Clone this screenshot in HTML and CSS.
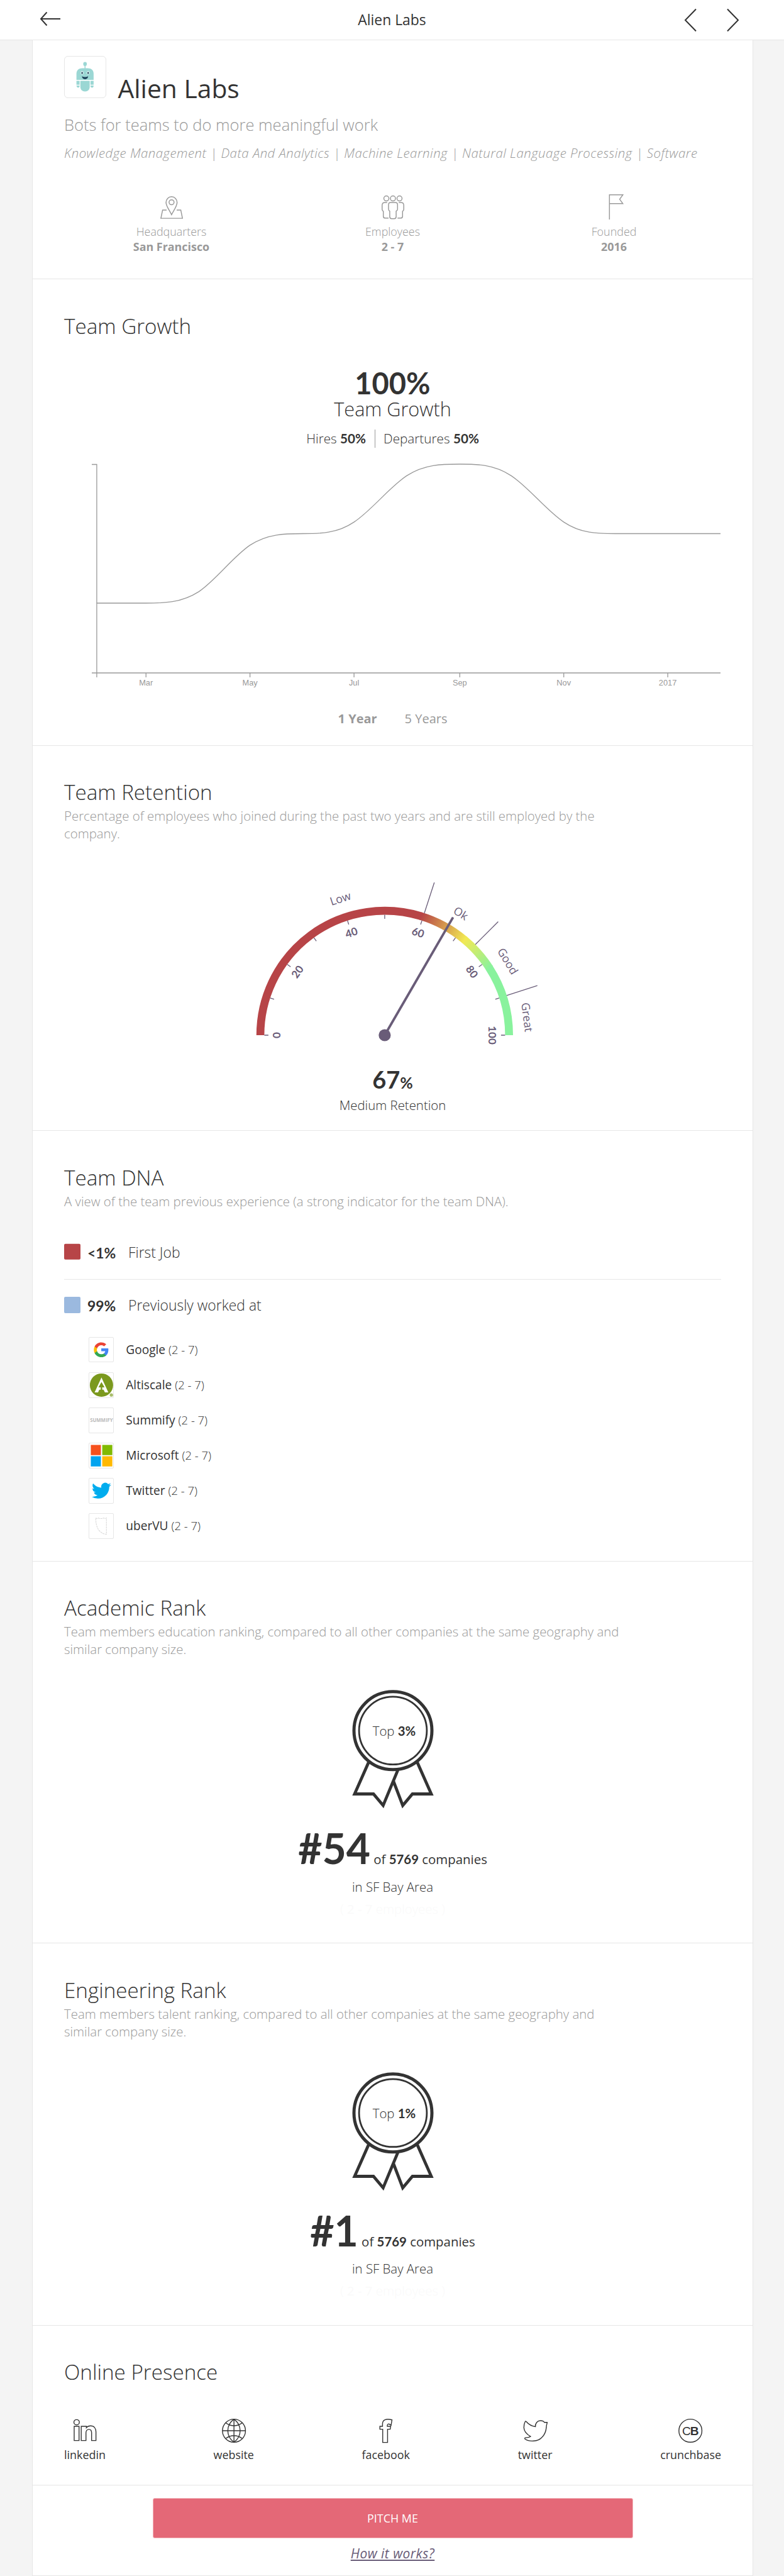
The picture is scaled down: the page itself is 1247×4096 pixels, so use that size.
FILE: index.html
```html
<!DOCTYPE html>
<html lang="en">
<head>
<meta charset="utf-8">
<title>Alien Labs</title>
<link rel="stylesheet" href="styles.css">
</head>
<body>
<header class="topbar">
  <svg class="back" viewBox="0 0 34 24"><path d="M11.5 1.5L2 12l9.500 10.500M2 12H33"/></svg>
  <span class="topbar-title">Alien Labs</span>
  <nav class="pager">
    <svg viewBox="0 0 20 38"><path d="M19 1.500L2 19l17 17.500"/></svg>
    <svg viewBox="0 0 20 38"><path d="M1 1.500L18 19L1 36.500"/></svg>
  </nav>
</header>
<main class="card">
  <section class="section hero">
    <div class="brand">
      <svg class="logo" viewBox="0 0 104 104">
        <g fill="#9bd7d4">
          <ellipse cx="52" cy="19" rx="4.600" ry="5.200"/><rect x="50.800" y="22" width="2.400" height="10"/>
          <path d="M30 59.500V44c0-9 6-14 15-14h14c9 0 15 5 15 14v15.500z"/>
          <path d="M40 62h24v15c0 8-5 12.500-12 12.500S40 85 40 77z"/>
          <path d="M30 62h8v10h-8zM66 62h8v10h-8zM30 74h8q0 5.500-3.500 5.500T30 74zM66 74h8q0 5.500-4 5.500T66 74z"/>
        </g>
        <g fill="#e4f4f4"><ellipse cx="44.500" cy="41.500" rx="3.500" ry="4.600"/><ellipse cx="60" cy="41.500" rx="3.500" ry="4.600"/></g>
        <g fill="#1d4058"><ellipse cx="44.500" cy="42" rx="1.900" ry="2.900"/><ellipse cx="60" cy="42" rx="1.900" ry="2.900"/><path d="M44 50.500q8 4 16 0q-1 7.500-8 7.500t-8-7.500z"/></g>
      </svg>
      <h1>Alien Labs</h1>
    </div>
    <p class="tagline">Bots for teams to do more meaningful work</p>
    <p class="tags">Knowledge Management | Data And Analytics | Machine Learning | Natural Language Processing | Software</p>
    <div class="stats">
      <div class="stat">
        <svg viewBox="0 0 69 69"><g transform="translate(6.500 9.500)"><path d="M27.800 46C22 34 14 24 14 15.500a13.800 14.500 0 0 1 27.600 0C41.600 24 34 34 27.800 46zM15.500 34.300H5.500L1.200 55H55L50.800 34.300H40.500"/><circle cx="27.800" cy="15" r="6.200"/></g></svg>
        <span>Headquarters</span><b>San Francisco</b>
      </div>
      <div class="stat">
        <svg viewBox="0 0 69 69"><g transform="translate(6.500 7.500)"><circle cx="11.600" cy="7.500" r="6.300"/><circle cx="28" cy="7.500" r="6.300"/><circle cx="44.400" cy="7.500" r="6.300"/><path d="M22 17.500H34q5.500 0 5.500 5.500V34q0 3.500-3.500 5V53q0 5-5 5H25q-5 0-5-5V39q-3-1.500-3-5V23q0-5.500 5-5.500zM13.500 17.500H8q-7 0-7 7V35q0 3 3 4.500V52q0 4.500 5 4.500h8M42.500 17.500H48q7 0 7 7V35q0 3-3 4.500V52q0 4.500-5 4.500H39.500"/></g></svg>
        <span>Employees</span><b>2 - 7</b>
      </div>
      <div class="stat">
        <svg viewBox="0 0 69 69"><path d="M22.500 67.500V6H56L48 17l8 11H22.500"/></svg>
        <span>Founded</span><b>2016</b>
      </div>
    </div>
  </section>

  <section class="section growth">
    <h2>Team Growth</h2>
    <div class="growth-value">100%</div>
    <div class="growth-label">Team Growth</div>
    <div class="moves"><span>Hires <b>50%</b></span><span>Departures <b>50%</b></span></div>
    <svg class="chart" viewBox="102 730 1045 370">
      <g fill="none" stroke="#999" stroke-width="1.300">
        <path d="M146 738.500H153.900V1070M146 1070H1146"/>
        <path d="M153.900 1070v7M232.200 1070v7M397.600 1070v7M563.100 1070v7M731.300 1070v7M896.700 1070v7M1062.100 1070v7"/>
        <path d="M153.900 959H232.200C260 959 288 959 316.500 940.600C343.500 922.200 370.600 885.300 397.600 866.900C425.600 848.500 453.500 848.500 481.500 848.500C508.700 848.500 535.900 848.500 563.100 830.100C591 811.700 619 774.800 647 756.400C675 738 703 738 731.300 738C758.500 738 785.800 738 813 756.400C841 774.800 869 811.700 896.700 830.100C924 848.500 951 848.500 978.500 848.500H1146"/>
      </g>
      <g class="axis">
        <text x="232.200" y="1090.300">Mar</text><text x="397.600" y="1090.300">May</text><text x="563.100" y="1090.300">Jul</text><text x="731.300" y="1090.300">Sep</text><text x="896.700" y="1090.300">Nov</text><text x="1062.100" y="1090.300">2017</text>
      </g>
    </svg>
    <div class="range"><b>1 Year</b><span>5 Years</span></div>
  </section>

  <section class="section retention">
    <h2>Team Retention</h2>
    <p class="sub">Percentage of employees who joined during the past two years and are still employed by the company.</p>
    <svg class="gauge" viewBox="-286.900 -255.200 600 285">
      <defs>
        <linearGradient id="warm" gradientUnits="userSpaceOnUse" x1="57.800" y1="-189.200" x2="127.100" y2="-151.500"><stop offset="0" stop-color="#b74447"/><stop offset="1" stop-color="#f2e953"/></linearGradient>
        <linearGradient id="fresh" gradientUnits="userSpaceOnUse" x1="127.100" y1="-151.500" x2="166.800" y2="-106.300"><stop offset="0" stop-color="#f2e953"/><stop offset="1" stop-color="#89f29d"/></linearGradient>
      </defs>
      <g fill="none" stroke-width="12.600">
        <path stroke="#89f29d" d="M165.800 -107.800A197.800 197.800 0 0 1 197.800 0"/>
        <path stroke="url(#fresh)" d="M126.100 -152.400A197.800 197.800 0 0 1 166.800 -106.300"/>
        <path stroke="url(#warm)" d="M56.800 -189.500A197.800 197.800 0 0 1 127.100 -151.500"/>
        <path stroke="#b74447" d="M-197.800 0A197.800 197.800 0 0 1 57.800 -189.200"/>
      </g>
      <g class="ticks">
        <path d="M-191.500 0h6.500" /><path d="M-191.500 0h6.500" transform="rotate(18)"/><path d="M-191.500 0h6.500" transform="rotate(36)"/><path d="M-191.500 0h6.500" transform="rotate(54)"/><path d="M-191.500 0h6.500" transform="rotate(72)"/><path d="M-191.500 0h6.500" transform="rotate(90)"/><path d="M-191.500 0h6.500" transform="rotate(108)"/><path d="M-191.500 0h6.500" transform="rotate(126)"/><path d="M-191.500 0h6.500" transform="rotate(144)"/><path d="M-191.500 0h6.500" transform="rotate(162)"/><path d="M-191.500 0h6.500" transform="rotate(180)"/>
        <path d="M-204 0h-51.300" transform="rotate(108)"/><path d="M-204 0h-51.300" transform="rotate(135)"/><path d="M-204 0h-51.300" transform="rotate(162)"/>
      </g>
      <g class="scale">
        <text y="-165.500" transform="rotate(-90)">0</text><text y="-165.500" transform="rotate(-54)">20</text><text y="-165.500" transform="rotate(-18)">40</text><text y="-165.500" transform="rotate(18)">60</text><text y="-165.500" transform="rotate(54)">80</text><text y="-165.500" transform="rotate(90)">100</text>
      </g>
      <g class="bands">
        <text y="-222" transform="rotate(-18)">Low</text><text y="-222" transform="rotate(32)">Ok</text><text y="-222" transform="rotate(59)">Good</text><text y="-222" transform="rotate(82.800)">Great</text>
      </g>
      <path d="M0 0L108.700 -187.400" stroke="#695c78" stroke-width="3.800"/>
      <circle r="9.600" fill="#695c78"/>
    </svg>
    <div class="retention-value">67<small>%</small></div>
    <div class="retention-label">Medium Retention</div>
  </section>

  <section class="section dna">
    <h2>Team DNA</h2>
    <p class="sub">A view of the team previous experience (a strong indicator for the team DNA).</p>
    <div class="share first"><i class="swatch red"></i><b>&lt;1%</b><span>First Job</span></div>
    <div class="share previous"><i class="swatch blue"></i><b>99%</b><span>Previously worked at</span></div>
    <ul class="companies">
      <li><svg viewBox="0 0 64 64"><g transform="translate(10.200 10.400) scale(1.770)"><path fill="#4285f4" d="M22.560 12.250c0-.78-.07-1.530-.2-2.250H12v4.260h5.920c-.26 1.370-1.040 2.530-2.210 3.310v2.770h3.570c2.080-1.920 3.280-4.740 3.280-8.090z"/><path fill="#34a853" d="M12 23c2.970 0 5.460-.98 7.280-2.660l-3.570-2.770c-.98.66-2.230 1.060-3.710 1.060-2.860 0-5.290-1.930-6.160-4.530H2.180v2.840C3.990 20.530 7.700 23 12 23z"/><path fill="#fbbc05" d="M5.840 14.090c-.22-.66-.35-1.360-.35-2.090s.13-1.430.35-2.090V7.070H2.180C1.430 8.550 1 10.220 1 12s.43 3.450 1.180 4.930l2.850-2.220.81-.62z"/><path fill="#ea4335" d="M12 5.380c1.620 0 3.060.56 4.210 1.640l3.150-3.150C17.450 2.090 14.970 1 12 1 7.700 1 3.990 3.470 2.180 7.070l3.660 2.840c.87-2.600 3.300-4.530 6.160-4.530z"/></g></svg><span>Google <small>(2 - 7)</small></span></li>
      <li><svg viewBox="0 0 64 64"><circle cx="32" cy="32" r="30.500" fill="#7b991e"/><path fill="#fff" d="M32 12L50 51H41L38 45H26L23 51H14z"/><path fill="#7b991e" d="M32 24L40 38H34V44H38V47H26V44H30V38H24z"/><circle cx="58" cy="58" r="4.300" fill="#a9bd6b"/></svg><span>Altiscale <small>(2 - 7)</small></span></li>
      <li><svg viewBox="0 0 64 64"><text class="wordmark" x="32" y="35.500" textLength="60" lengthAdjust="spacingAndGlyphs">SUMMIFY</text></svg><span>Summify <small>(2 - 7)</small></span></li>
      <li><svg viewBox="0 0 64 64"><path fill="#f6511d" d="M4 4h26.500v27H4z"/><path fill="#80ba01" d="M34 4h26.500v27H34z"/><path fill="#02a4ef" d="M4 34h26.500v26.500H4z"/><path fill="#ffb902" d="M34 34h26.500v26.500H34z"/></svg><span>Microsoft <small>(2 - 7)</small></span></li>
      <li><svg viewBox="0 0 64 64"><path fill="#00acee" transform="translate(6.500 6.200) scale(2.130)" d="M23.953 4.570a10 10 0 0 1-2.825.775 4.958 4.958 0 0 0 2.163-2.723c-.951.555-2.005.959-3.127 1.184a4.920 4.920 0 0 0-8.384 4.482C7.690 8.095 4.067 6.130 1.640 3.162a4.822 4.822 0 0 0-.666 2.475c0 1.710.870 3.213 2.188 4.096a4.904 4.904 0 0 1-2.228-.616v.060a4.923 4.923 0 0 0 3.946 4.827 4.996 4.996 0 0 1-2.212.085 4.936 4.936 0 0 0 4.604 3.417 9.867 9.867 0 0 1-6.102 2.105c-.390 0-.779-.023-1.170-.067a13.995 13.995 0 0 0 7.557 2.209c9.053 0 13.998-7.496 13.998-13.985 0-.210 0-.420-.015-.630A9.935 9.935 0 0 0 24 4.590z"/></svg><span>Twitter <small>(2 - 7)</small></span></li>
      <li><svg viewBox="0 0 64 64"><path fill="none" stroke="#d9d9d9" stroke-width="1.800" stroke-dasharray="5 1.500" d="M17 11q4 3 7 0q6 3 14 0q3 3 7 0V54Q34 53 25 43Q17 32 17 11z"/></svg><span>uberVU <small>(2 - 7)</small></span></li>
    </ul>
  </section>

  <section class="section rank">
    <h2>Academic Rank</h2>
    <p class="sub">Team members education ranking, compared to all other companies at the same geography and similar company size.</p>
    <svg class="badge" viewBox="-66 -65 132 192">
      <circle r="62" stroke-width="5"/><circle r="53.900" stroke-width="2.800"/>
      <path stroke-width="4.800" d="M-38.500 50L-61 100.700H-31L-15.600 119L8.500 61M38.500 50L61 100.700H31L15.600 119L.7 80"/>
      <text x="2" y="8">Top <tspan class="num">3%</tspan></text>
    </svg>
    <div class="place"><b>#54</b> of <em>5769</em> companies</div>
    <div class="area">in SF Bay Area</div>
    <div class="faint">( <b>2 - 7</b> employees )</div>
  </section>

  <section class="section rank">
    <h2>Engineering Rank</h2>
    <p class="sub">Team members talent ranking, compared to all other companies at the same geography and similar company size.</p>
    <svg class="badge" viewBox="-66 -65 132 192">
      <circle r="62" stroke-width="5"/><circle r="53.900" stroke-width="2.800"/>
      <path stroke-width="4.800" d="M-38.500 50L-61 100.700H-31L-15.600 119L8.500 61M38.500 50L61 100.700H31L15.600 119L.7 80"/>
      <text x="2" y="8">Top <tspan class="num">1%</tspan></text>
    </svg>
    <div class="place"><b>#1</b> of <em>5769</em> companies</div>
    <div class="area">in SF Bay Area</div>
    <div class="faint">( <b>2 - 7</b> employees )</div>
  </section>

  <section class="section online">
    <h2>Online Presence</h2>
    <div class="links">
      <a><svg viewBox="0 0 60 60"><ellipse cx="9.200" cy="8.700" rx="6.800" ry="6.600"/><path d="M3.100 18.700H15.200V54.300H3.100zM20.700 18.700H33.500v3.500C36 19 40 17.700 44 17.700c8.500 0 13.400 6 13.400 15V54.300H46.500V35c0-5-2-8.500-6.500-8.500-5 0-7.500 3.500-7.500 8.500v19.300H20.700z"/></svg>linkedin</a>
      <a><svg viewBox="0 0 60 60"><circle cx="30" cy="29.700" r="28.700"/><path d="M30 1V58.400M1.300 29.700H58.700M30 1C9.500 16 9.500 43.500 30 58.400M30 1C50.500 16 50.500 43.500 30 58.400M9.700 10.500Q30 24.500 50.300 10.500M9.700 49Q30 35 50.300 49"/></svg>website</a>
      <a><svg viewBox="0 0 60 60"><path d="M44.600 2.800L42.300 16.200C36 11 33 13 33 16.500v2.200h8.300L40.200 26H33.600V59H21.500V26H14.500V18.700H21V12C21.500 3.500 29 -1.500 44.600 2.800z"/></svg>facebook</a>
      <a><svg viewBox="0 0 60 60"><path d="M7.500 6.700C13 13 20 18.500 30.700 19.500C30 11 36 4.700 43.200 4.700C48 4.700 51.500 6.500 53 9L60 9C60 13 57.500 16 58 21C57 32 53 41 46.600 46.500C37 57 16 58 4.800 50.500C2.500 47 7 47 10 46.800Q15 46.500 18.500 44C10 39 2.500 32 2 22.300Q2 13 5 7.500Q6 5.500 7.500 6.700z"/></svg>twitter</a>
      <a><svg viewBox="0 0 60 60"><circle cx="30" cy="29.700" r="28.700"/><text x="29.500" y="40.500" class="cb">C<tspan class="cb-bold">B</tspan></text></svg>crunchbase</a>
    </div>
  </section>

  <footer class="cta">
    <button type="button">PITCH ME</button>
    <a class="how">How it works?</a>
  </footer>
</main>
</body>
</html>
```
FILE: styles.css
```css
* { box-sizing: border-box; }
body { margin: 0; background: #f4f4f4; color: #333; font-family: "Open Sans", "Noto Sans", sans-serif; font-weight: 300; }
h1, h2, p, ul { margin: 0; padding: 0; font-weight: 300; }
svg { display: block; }

.topbar { display: grid; grid-template-columns: 1fr auto 1fr; align-items: center; height: 64px; padding: 0 63px; background: #fff; border-bottom: 1.500px solid #e6e6e6; }
.topbar svg { fill: none; stroke: #333; stroke-width: 2; }
.back { width: 34px; height: 24px; margin-bottom: 3px; }
.topbar-title { font-size: 22.900px; line-height: 30px; font-weight: 400; }
.pager { display: flex; justify-content: flex-end; gap: 48px; margin-right: 8px; }
.pager svg { width: 20px; height: 38px; }

.card { width: 1147px; margin-left: 51px; background: #fff; border: solid #e6e6e6; border-width: 0 1px; }
.section { height: 607.500px; padding: 52.600px 50px 0; border-bottom: 1.500px solid #e6e6e6; }
h2 { font-size: 33.200px; line-height: 44px; }
.sub { width: 890px; margin-top: 1px; font-size: 20.400px; line-height: 28px; color: #999; }
.sub + * { transform: translateY(.8px); }

.hero { height: 380px; padding-top: 25.400px; color: #999; }
.brand { display: flex; align-items: baseline; gap: 19px; }
.logo { width: 66.500px; height: 66.500px; border: 1.500px solid #e6e6e6; border-radius: 6px; }
h1 { font-size: 40.800px; line-height: 48px; font-weight: 400; color: #333; }
.tagline { margin-top: 16px; font-size: 25.500px; line-height: 36px; }
.tags { margin-top: 13.600px; font-size: 20.400px; line-height: 28px; font-style: italic; letter-spacing: .47px; white-space: nowrap; }
.stats { display: grid; grid-template-columns: repeat(3, 1fr); margin: 48.500px -5.500px 0; }
.stat { display: flex; flex-direction: column; align-items: center; font-size: 17.900px; line-height: 24px; }
.stat svg { width: 44px; height: 44px; margin-bottom: 6.500px; fill: none; stroke: #999; stroke-width: 2.300; }
.stat b { font-weight: 700; }

.growth { height: 741.500px; }
.growth-value { margin-top: 45.500px; text-align: center; font: 700 47px/46px Lato, sans-serif; }
.growth-label { text-align: center; font-size: 30.600px; line-height: 36px; }
.moves { display: flex; justify-content: center; margin-top: 15.400px; font-size: 20.700px; line-height: 29px; }
.moves span { padding: 0 13.500px; }
.moves span + span { border-left: 1.300px solid #999; }
.moves b { font-family: Lato, sans-serif; font-weight: 700; }
.chart { width: 1045px; height: 370px; margin-top: 18px; }
.axis { font: 400 12.800px "Liberation Sans", sans-serif; fill: #999; text-anchor: middle; }
.range { display: flex; justify-content: center; gap: 44px; margin-top: 28.800px; font-size: 20px; line-height: 28px; font-weight: 400; color: #999; }
.range b { font-weight: 700; }

.retention { height: 612.500px; }
.gauge { width: 600px; height: 285px; margin: 50.600px auto 0; }
.ticks { stroke: #695c78; stroke-width: 1.300; }
.scale { font: 700 17px Lato, sans-serif; fill: #695c78; text-anchor: middle; }
.bands { font-size: 17.900px; font-weight: 400; fill: #695c78; text-anchor: middle; }
.retention-value { margin-top: 21.400px; text-align: center; font: 700 38px/40px Lato, sans-serif; }
.retention-value small { font-size: 25px; line-height: 1; }
.retention-label { margin-top: 6.600px; text-align: center; font-size: 20.400px; line-height: 28px; }

.dna { height: 684.500px; }
.share { display: flex; font-size: 22.900px; line-height: 30px; }
.share b { width: 65px; font-family: Lato, sans-serif; font-weight: 700; }
.swatch { width: 25.500px; height: 25.500px; margin: 1px 11.500px 0 0; border-radius: 2px; }
.red { background: #b74447; }
.blue { background: #9bb9df; }
.first { margin-top: 52.300px; padding-bottom: 27.300px; border-bottom: 1.300px solid #e6e6e6; }
.previous { margin-top: 27px; }
.companies { display: grid; grid-auto-rows: 40.800px; gap: 15.360px; margin: 34.500px 0 0 38.500px; list-style: none; }
.companies li { display: flex; gap: 19px; font-size: 19.100px; line-height: 40.800px; font-weight: 400; }
.companies svg { width: 40.800px; height: 40.800px; border: 1.300px solid #e6e6e6; border-radius: 2px; }
.companies small { font-size: 18.400px; line-height: 1; font-weight: 300; }
.wordmark { font: 700 13px "Open Sans", sans-serif; fill: #bbb; text-anchor: middle; }

.badge { width: 132px; height: 192px; margin: 50px auto 0; fill: none; stroke: #333; }
.badge text { fill: #333; stroke: none; font-size: 20.400px; text-anchor: middle; }
.badge .num { font-family: Lato, sans-serif; font-weight: 700; }
.place { margin-top: 28.200px; text-align: center; font-size: 20.400px; line-height: 66px; font-weight: 400; height: 66px; }
.place b { font: 700 66px/66px Lato, sans-serif; }
.place em { font-family: Lato, sans-serif; font-style: normal; font-weight: 700; }
.area { margin-top: 13.500px; text-align: center; font-size: 20.400px; line-height: 28px; }
.faint { margin-top: 6.800px; text-align: center; font-size: 20.400px; line-height: 28px; color: #fafafa; }

.online { height: 254px; }
.links { display: flex; justify-content: space-between; margin-top: 52px; }
.links a { display: flex; flex-direction: column; align-items: center; font-size: 17.900px; line-height: 24px; font-weight: 400; }
.links svg { width: 38.300px; height: 38.300px; margin-bottom: 6.500px; fill: none; stroke: #333; stroke-width: 2.200; overflow: visible; }
.links .cb { font: 400 30px "Liberation Sans", sans-serif; fill: #333; stroke: none; text-anchor: middle; letter-spacing: -1.500px; }
.links .cb-bold { font-weight: 700; }

.cta { display: flex; flex-direction: column; align-items: center; height: 144.500px; padding-top: 20px; border-bottom: 1.500px solid #e6e6e6; }
.cta button { width: 764px; height: 64.700px; padding: 0; background: #e46877; border: 1.300px solid #f3b9bf; border-radius: 3px; color: #fff; font: 400 17.900px "Open Sans", sans-serif; }
.how { margin-top: 10px; font-size: 20.900px; line-height: 28px; font-weight: 400; font-style: italic; letter-spacing: .5px; text-decoration: underline; color: #695c78; }
```
